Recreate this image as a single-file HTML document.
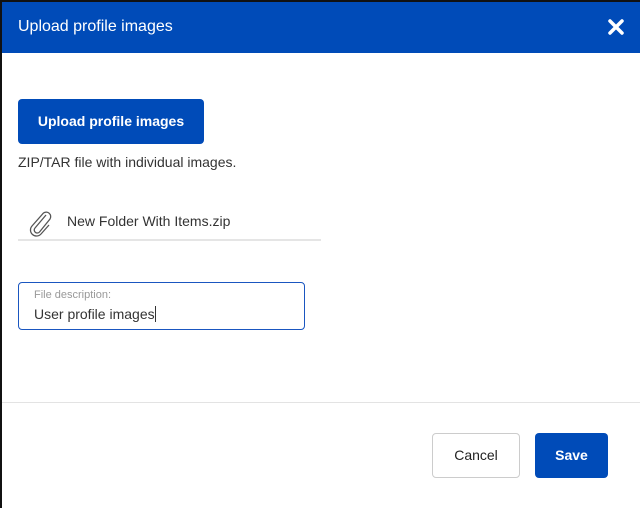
<!DOCTYPE html>
<html><head><style>
body{margin:0;width:640px;height:508px;overflow:hidden;background:#fff;font-family:"Liberation Sans",sans-serif;position:relative}
.lb{position:absolute;left:0;top:0;width:2px;height:508px;background:#111}
.hd{position:absolute;left:0;top:0;width:640px;height:53px;background:#004bb8;border-top:2px solid #111;box-sizing:border-box}
.hd span{position:absolute;left:18px;top:16px;color:#fff;font-size:16px}
.btn{position:absolute;box-sizing:border-box;border-radius:4px;font-weight:bold;font-size:14px;text-align:center}
.blue{background:#004bb8;color:#fff}
</style></head><body>
<div class="hd"><span>Upload profile images</span>
<svg style="position:absolute;left:607px;top:16px" width="18" height="18" viewBox="0 0 18 18"><path d="M3 3L15 15M15 3L3 15" stroke="#fff" stroke-width="3.5" stroke-linecap="round"/></svg></div>
<div class="lb"></div>
<div class="btn blue" style="left:18px;top:99px;width:186px;height:45px;line-height:45px">Upload profile images</div>
<div style="position:absolute;left:18px;top:154px;font-size:14px;color:#333">ZIP/TAR file with individual images.</div>
<svg style="position:absolute;left:28px;top:210px" width="26" height="28" viewBox="0 0 26 28"><path d="M18 5L7 18a3 3 0 0 0 4.5 4L22 9a4.5 4.5 0 0 0-6.5-6L4 16a6 6 0 0 0 9 8l8-9" fill="none" stroke="#555" stroke-width="1.3"/></svg>
<div style="position:absolute;left:67px;top:213px;font-size:14px;color:#333">New Folder With Items.zip</div>
<div style="position:absolute;left:18px;top:239px;width:303px;height:2px;background:#e5e5e5"></div>
<div style="position:absolute;left:18px;top:282px;width:287px;height:48px;border:1px solid #1a56c0;border-radius:4px;box-sizing:border-box">
<div style="position:absolute;left:15px;top:6px;font-size:11px;color:#999">File description:</div>
<div style="position:absolute;left:15px;top:23px;font-size:14px;color:#333">User profile images<span style="display:inline-block;width:1px;height:16px;background:#333;vertical-align:-3px"></span></div></div>
<div style="position:absolute;left:2px;top:402px;width:638px;height:1px;background:#e3e3e3"></div>
<div class="btn" style="left:432px;top:433px;width:88px;height:45px;line-height:43px;border:1px solid #ccc;color:#222;font-weight:normal;font-size:14px">Cancel</div>
<div class="btn blue" style="left:535px;top:433px;width:73px;height:45px;line-height:45px">Save</div>
</body></html>
